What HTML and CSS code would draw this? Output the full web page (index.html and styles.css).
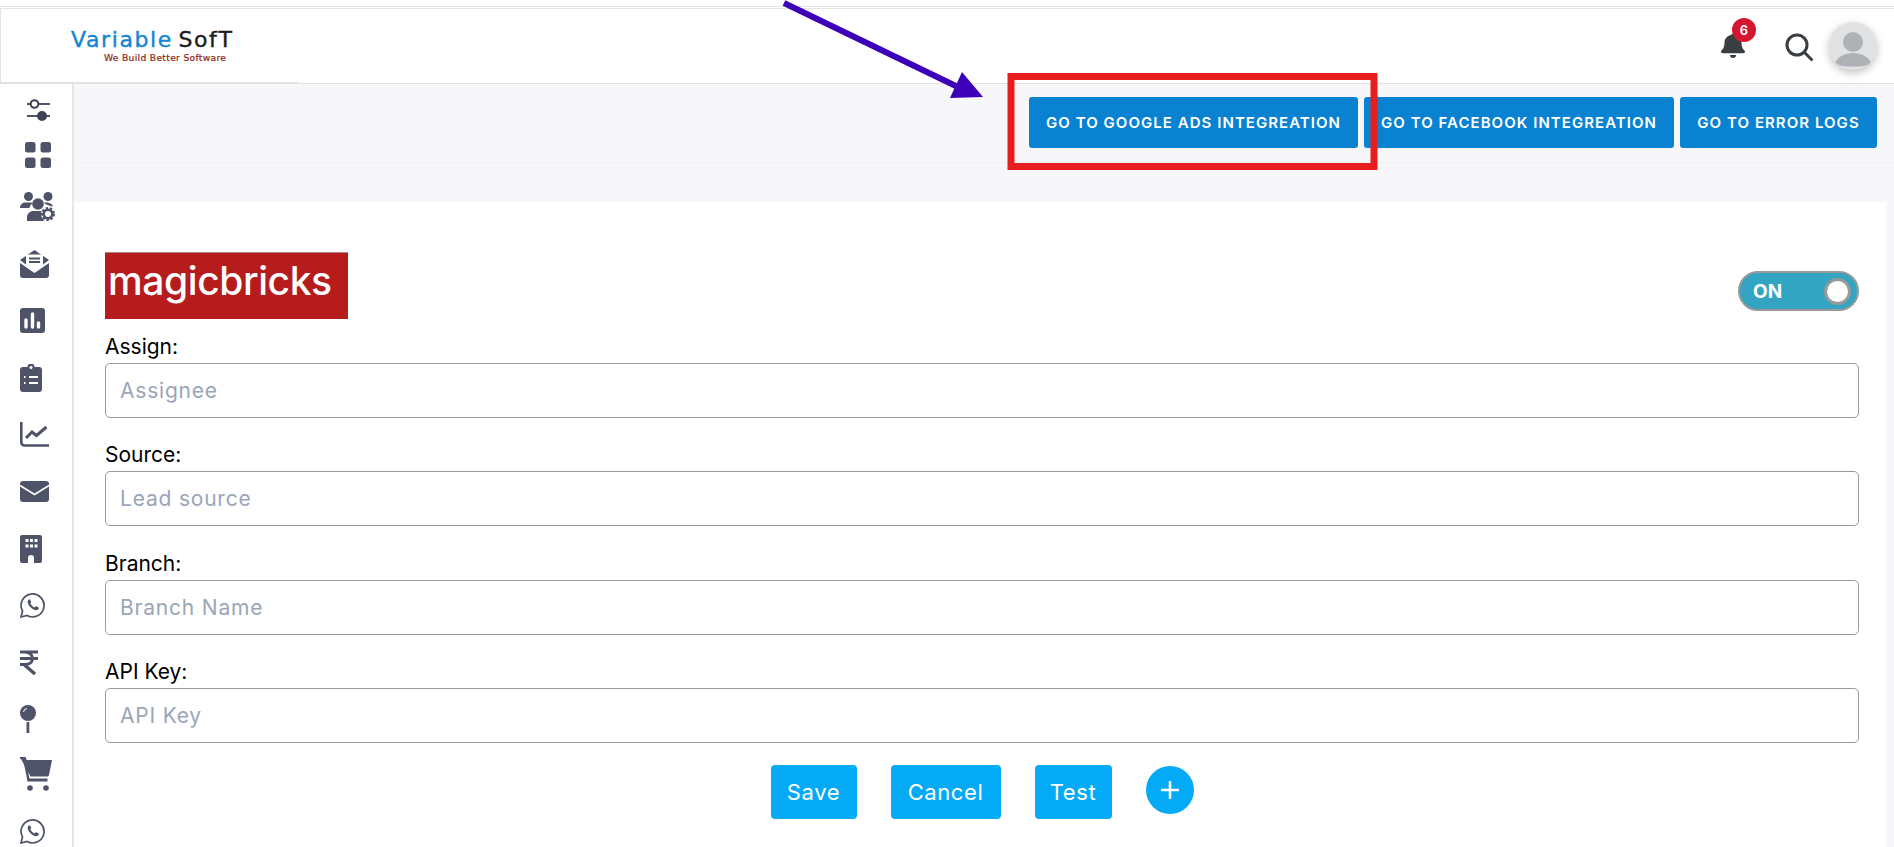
FILE: index.html
```html
<!DOCTYPE html>
<html lang="en">
<head>
<meta charset="utf-8">
<title>Integrations</title>
<link rel="stylesheet" href="styles.css">
</head>
<body>
<div class="page">
  <header class="header">
    <div class="brand">
      <div class="brand-name"><span class="brand-blue">Variable</span> <span class="brand-dark">SofT</span></div>
      <div class="brand-tag">We Build Better Software</div>
    </div>
    <div class="header-tools">
      <div class="bell">
        <svg class="bell-icon" viewBox="0 0 24 24"><path d="M12 24a3 3 0 0 0 3-3H9a3 3 0 0 0 3 3z"/><path d="M23.500 16.500c-1-1-3-2.700-3-8 0-3.800-3-7-7-7.700V0h-3v.8c-4 .7-7 3.900-7 7.700 0 5.300-2 7-3 8-.3.300-.5.700-.5 1.100 0 .9.700 1.700 1.700 1.700h20.600c1 0 1.700-.8 1.700-1.700 0-.4-.2-.8-.5-1.100z"/></svg>
        <span class="badge">6</span>
      </div>
      <svg class="search-icon" viewBox="0 0 28 28"><circle cx="12" cy="12" r="10"/><line x1="19.500" y1="19.500" x2="26.500" y2="26.500"/></svg>
      <div class="avatar">
        <svg viewBox="0 0 48 48"><circle cx="24" cy="20" r="10" fill="#aeb2b6"/><path d="M6 41c2-6 10-10 18-10s16 4 18 10c-4 3-10 3.500-18 3.500S10 44 6 41z" fill="#aeb2b6"/></svg>
      </div>
    </div>
  </header>
  <div class="main">
    <nav class="sidebar">
      <div class="nav-item nav-first nav-inset"><svg width="23" height="22" viewBox="0 0 23 22"><path d="M0 5h23M0 17h23" stroke="#4e5368" stroke-width="2"/><circle cx="7.500" cy="5" r="3.800" fill="#fff" stroke="#3e4152" stroke-width="2"/><circle cx="15" cy="17" r="5" fill="#3e4152"/></svg></div>
      <div class="nav-item nav-short nav-grid"><svg width="26" height="26" viewBox="0 0 26 26" fill="#4e5368"><rect width="10.500" height="10.500" rx="2.500"/><rect x="15.500" width="10.500" height="10.500" rx="2.500"/><rect y="15.500" width="10.500" height="10.500" rx="2.500"/><rect x="15.500" y="15.500" width="10.500" height="10.500" rx="2.500"/></svg></div>
      <div class="nav-item nav-users"><svg width="35" height="29" viewBox="0 0 35 29" fill="#4e5368"><circle cx="8.500" cy="4.500" r="4.500"/><circle cx="28" cy="4.500" r="4.500"/><path d="M0 16c0-3 2-5.500 5-5.500h6c.8 0 1.300.2 1.800.5-1.800 1.200-3 3-3.300 5z"/><path d="M24 11c1.500-.6 3-.6 5 0 2 .6 3.500 1.800 4 3.500l-3-.5c-2-1-4-1.300-6-3z"/><circle cx="18" cy="12" r="5.800"/><path d="M7 29v-3.500c0-4 3-6.500 6.500-6.500h8c1 0 1.800.2 2.500.6-1.500 2.500-1.500 6.400 0 9.400z"/><circle cx="28" cy="22" r="7" fill="#fff"/><circle cx="28" cy="22" r="4.300" fill="none" stroke="#4e5368" stroke-width="2.600"/><circle cx="28" cy="22" r="6" fill="none" stroke="#4e5368" stroke-width="2" stroke-dasharray="2.400 1.800"/></svg></div>
      <div class="nav-item"><svg width="29" height="28" viewBox="0 0 29 28"><path d="M14.500 0 29 10 14.500 21 0 10z" fill="#4e5368"/><path d="M6 4.500h17v11l-8.500 6-8.500-6z" fill="#fff"/><path d="M9 8.500h11M9 12h11" stroke="#4e5368" stroke-width="2"/><path d="M0 13l14.500 10L29 13v12q0 3-3 3H3q-3 0-3-3z" fill="#4e5368"/></svg></div>
      <div class="nav-item"><svg width="25" height="25" viewBox="0 0 25 25"><rect width="25" height="25" rx="3" fill="#4e5368"/><path d="M6 12v7M12.500 6v13M18.500 15v4" stroke="#fff" stroke-width="3.400" stroke-linecap="round"/></svg></div>
      <div class="nav-item"><svg width="22" height="28" viewBox="0 0 22 28"><path d="M3 3h4.500a3.500 3.500 0 0 1 7 0H19q3 0 3 3v19q0 3-3 3H3q-3 0-3-3V6q0-3 3-3z" fill="#4e5368"/><circle cx="11" cy="3.500" r="1.500" fill="#fff"/><path d="M9 13h9M9 19h9M4 13h1.500M4 19h1.500" stroke="#fff" stroke-width="1.800"/></svg></div>
      <div class="nav-item"><svg width="29" height="25" viewBox="0 0 29 25" fill="none" stroke="#4e5368" stroke-width="2.600"><path d="M1.300 0v20q0 3.500 3.500 3.500H29"/><path d="M6 16l6-6 4.500 3.500L26.500 5" stroke-width="3"/></svg></div>
      <div class="nav-item"><svg width="29" height="21" viewBox="0 0 29 21"><rect width="29" height="21" rx="3" fill="#4e5368"/><path d="M0 4.500l14.500 9 14.500-9" fill="none" stroke="#fff" stroke-width="1.800"/></svg></div>
      <div class="nav-item"><svg width="22" height="28" viewBox="0 0 22 28"><path d="M2 0h18q2 0 2 2v24q0 2-2 2h-6v-5a3 3 0 0 0-6 0v5H2q-2 0-2-2V2q0-2 2-2z" fill="#4e5368"/><path d="M5.500 5.500h3M10 5.500h3M14.500 5.500h3M5.500 11h3M10 11h3M14.500 11h3" stroke="#fff" stroke-width="3.200"/></svg></div>
      <div class="nav-item"><svg width="25" height="25" viewBox="0 0 25 25"><path d="M1 24l1.500-6A11.500 11.500 0 1 1 7 22.500z" fill="none" stroke="#4e5368" stroke-width="1.700"/><path d="M9 6.500c-.8.500-1.700 1.700-1.200 3.500.8 2.800 4 6 7 7 1.600.5 3 0 3.800-1 .4-.6.3-1.200 0-1.500l-2.300-1.200c-.4-.2-.7 0-1 .3l-.7.900c-1.800-.6-3.600-2.400-4.300-4.200l.7-.8c.3-.4.3-.6.100-1L9.900 6.600c-.2-.4-.6-.4-.9-.1z" fill="#4e5368"/></svg></div>
      <div class="nav-item"><svg width="18" height="25" viewBox="0 0 18 25" fill="none" stroke="#4e5368" stroke-width="3"><path d="M0 2h18M0 8.500h18M0 14.500h5c4.500 0 7.500-2.500 7.500-6S9.500 2 5 2"/><path d="M4 14.500 15 24" stroke-width="3.400"/></svg></div>
      <div class="nav-item nav-pin"><svg width="16" height="28" viewBox="0 0 16 28"><circle cx="8" cy="8" r="8" fill="#4e5368"/><path d="M7 3.500A4 4 0 0 0 3.500 7" fill="none" stroke="#fff" stroke-width="1"/><rect x="6.500" y="17" width="2.800" height="11" fill="#4e5368"/></svg></div>
      <div class="nav-item nav-cart"><svg width="32" height="36" viewBox="0 0 32 36" fill="#4e5368"><path d="M0 0h5.500l1.200 3H32l-3 15q-.3 1.500-1.700 1.500H10.500z"/><rect x="7.500" y="21.500" width="20" height="3"/><path d="M5 0l5 24h-2.500L3 2H0V0z"/><circle cx="10" cy="31" r="2.800"/><circle cx="26" cy="31" r="2.800"/></svg></div>
      <div class="nav-item"><svg width="25" height="25" viewBox="0 0 25 25"><path d="M1 24l1.500-6A11.500 11.500 0 1 1 7 22.500z" fill="none" stroke="#4e5368" stroke-width="1.700"/><path d="M9 6.500c-.8.500-1.700 1.700-1.200 3.500.8 2.800 4 6 7 7 1.600.5 3 0 3.800-1 .4-.6.3-1.200 0-1.500l-2.300-1.200c-.4-.2-.7 0-1 .3l-.7.900c-1.800-.6-3.600-2.400-4.300-4.200l.7-.8c.3-.4.3-.6.100-1L9.900 6.600c-.2-.4-.6-.4-.9-.1z" fill="#4e5368"/></svg></div>
    </nav>
    <main class="content">
      <div class="actions">
        <a class="action-btn btn-google">GO TO GOOGLE ADS INTEGREATION</a>
        <a class="action-btn btn-facebook">GO TO FACEBOOK INTEGREATION</a>
        <a class="action-btn btn-logs">GO TO ERROR LOGS</a>
      </div>
      <section class="card">
        <div class="card-head">
          <div class="mb-logo">magicbricks</div>
          <div class="toggle"><span class="toggle-label">ON</span><span class="toggle-knob"></span></div>
        </div>
        <form class="fields">
          <div class="field"><label class="field-label">Assign:</label><input class="field-input" placeholder="Assignee"></div>
          <div class="field"><label class="field-label">Source:</label><input class="field-input" placeholder="Lead source"></div>
          <div class="field"><label class="field-label">Branch:</label><input class="field-input" placeholder="Branch Name"></div>
          <div class="field"><label class="field-label">API Key:</label><input class="field-input" placeholder="API Key"></div>
        </form>
        <div class="form-actions">
          <button class="form-btn btn-save" type="button">Save</button>
          <button class="form-btn btn-cancel" type="button">Cancel</button>
          <button class="form-btn btn-test" type="button">Test</button>
          <button class="add-btn" type="button"><svg width="18" height="18" viewBox="0 0 18 18"><path d="M9 1v16M1 9h16" stroke="#fff" stroke-width="2.600" stroke-linecap="round"/></svg></button>
        </div>
      </section>
    </main>
  </div>
  <svg class="annotation" width="1894" height="847" viewBox="0 0 1894 847">
    <rect x="1011" y="76.500" width="363" height="90" fill="none" stroke="#e61e1e" stroke-width="7"/>
    <path d="M784 3 960 88" stroke="#3d00b8" stroke-width="6" fill="none"/>
    <path d="M962 72 950 98 983 97z" fill="#3d00b8"/>
  </svg>
</div>
</body>
</html>
```
FILE: styles.css
```css
*, *::before, *::after { box-sizing: border-box; }
html, body { margin: 0; padding: 0; background: #fff; }
body { font-family: "Inter", "Liberation Sans", sans-serif; color: #000; }
.page { position: relative; width: 1894px; height: 847px; overflow: hidden; padding-top: 6px; }
.page::before { content: ""; display: block; height: 2px; border-top: 1px solid #e2e2e2; }
.header { display: flex; justify-content: space-between; height: 76px; border-top: 1px solid #e4e4e4; border-bottom: 1px solid #e0e0e0; }
.brand { width: 298px; height: 75px; border-left: 1px solid #e4e4e4; border-bottom: 2px solid #e2e2e2; padding: 18px 0 0 70px; }
.brand-name { font-family: "DejaVu Sans", sans-serif; font-size: 22px; line-height: 26px; letter-spacing: 1.6px; word-spacing: -3px; white-space: nowrap; -webkit-text-stroke: .4px; }
.brand-blue { color: #1585d2; }
.brand-dark { color: #1c1c1c; }
.brand-tag { font-family: "DejaVu Sans", sans-serif; font-size: 9.200px; line-height: 10px; color: #8f2413; margin-left: 33px; letter-spacing: .3px; white-space: nowrap; -webkit-text-stroke: .2px; }
.header-tools { display: flex; align-items: flex-start; padding-right: 17px; }
.bell { position: relative; width: 24px; height: 24px; margin-top: 25px; }
.bell-icon { display: block; width: 24px; height: 24px; fill: #3a3d42; }
.badge { position: absolute; left: 11px; top: -16px; width: 24px; height: 24px; border-radius: 50%; background: #d5162f; color: #fff; font-size: 13px; font-weight: 600; line-height: 24px; text-align: center; }
.search-icon { width: 28px; height: 28px; margin: 24px 0 0 40px; fill: none; stroke: #3a3d42; stroke-width: 3; stroke-linecap: round; }
.avatar { width: 48px; height: 48px; margin: 13px 0 0 16px; border-radius: 50%; background: #e1e2e4; box-shadow: 0 3px 8px rgba(0,0,0,.25); overflow: hidden; }
.avatar svg { display: block; }
.main { display: flex; height: 763px; }
.sidebar { width: 74px; flex: none; border-right: 2px solid #e6e6e6; padding-top: 3px; overflow: hidden; }
.nav-item { display: flex; align-items: center; height: 57px; padding-left: 20px; }
.nav-item svg { display: block; flex: none; }
.nav-first { height: 46px; }
.nav-short { height: 44px; }
.nav-inset { padding-left: 27px; }
.nav-grid { padding-left: 25px; }
.nav-users { height: 58px; }
.nav-pin { height: 56px; }
.nav-cart { height: 56px; }
.content { flex: 1; min-width: 0; background: #f7f7fa; }
.actions { display: flex; justify-content: flex-end; gap: 6px; height: 79px; padding: 13px 17px 0 0; border-bottom: 1px solid #f1f1f3; margin-bottom: 39px; }
.action-btn { display: flex; align-items: center; justify-content: center; height: 51px; border-radius: 3px; background: #0a82d2; color: #fff; font-size: 15px; font-weight: 600; letter-spacing: 1.05px; white-space: nowrap; }
.btn-google { width: 329px; }
.btn-facebook { width: 310px; }
.btn-logs { width: 197px; }
.card { background: #fff; margin-right: 8px; padding: 50px 27px 0 31px; height: 645px; }
.card-head { display: flex; justify-content: space-between; align-items: flex-start; }
.mb-logo { width: 243px; height: 67px; background: #b71c1c; border-top: 1px solid #a88; color: #fff; font-size: 39px; font-weight: 500; line-height: 56px; letter-spacing: -.4px; padding-left: 3px; white-space: nowrap; }
.toggle { display: flex; align-items: center; justify-content: space-between; width: 121px; height: 40px; margin-top: 19px; padding: 0 6px 0 13px; border: 2px solid #999; border-radius: 20px; background: #33a5c2; }
.toggle-label { color: #fff; font-size: 19px; font-weight: 700; }
.toggle-knob { width: 27px; height: 27px; border-radius: 50%; background: #fff; border: 3px solid #999; }
.fields { display: flex; flex-direction: column; gap: 23.330px; margin-top: 14px; }
.field { display: flex; flex-direction: column; }
.field-label { height: 30px; font-size: 21px; line-height: 27px; color: #000; }
.field-input { display: block; width: 100%; height: 55px; padding: 0 14px; border: 1px solid #9a9a9a; border-radius: 5px; font-family: inherit; font-size: 21px; letter-spacing: .8px; background: #fff; }
.field-input::placeholder { color: #9aa5b8; opacity: 1; }
.form-actions { display: flex; justify-content: center; align-items: flex-start; gap: 34px; margin-top: 22px; }
.form-btn { height: 54px; border: 0; border-radius: 4px; background: #04aaf6; color: #fff; font-family: inherit; font-size: 22px; letter-spacing: .6px; padding: 0; }
.btn-save { width: 86px; }
.btn-cancel { width: 110px; }
.btn-test { width: 77px; }
.add-btn { display: flex; align-items: center; justify-content: center; width: 48px; height: 48px; margin-top: 1px; padding: 0; border: 0; border-radius: 50%; background: #04aaf6; }
.annotation { position: absolute; left: 0; top: 0; pointer-events: none; }
```
